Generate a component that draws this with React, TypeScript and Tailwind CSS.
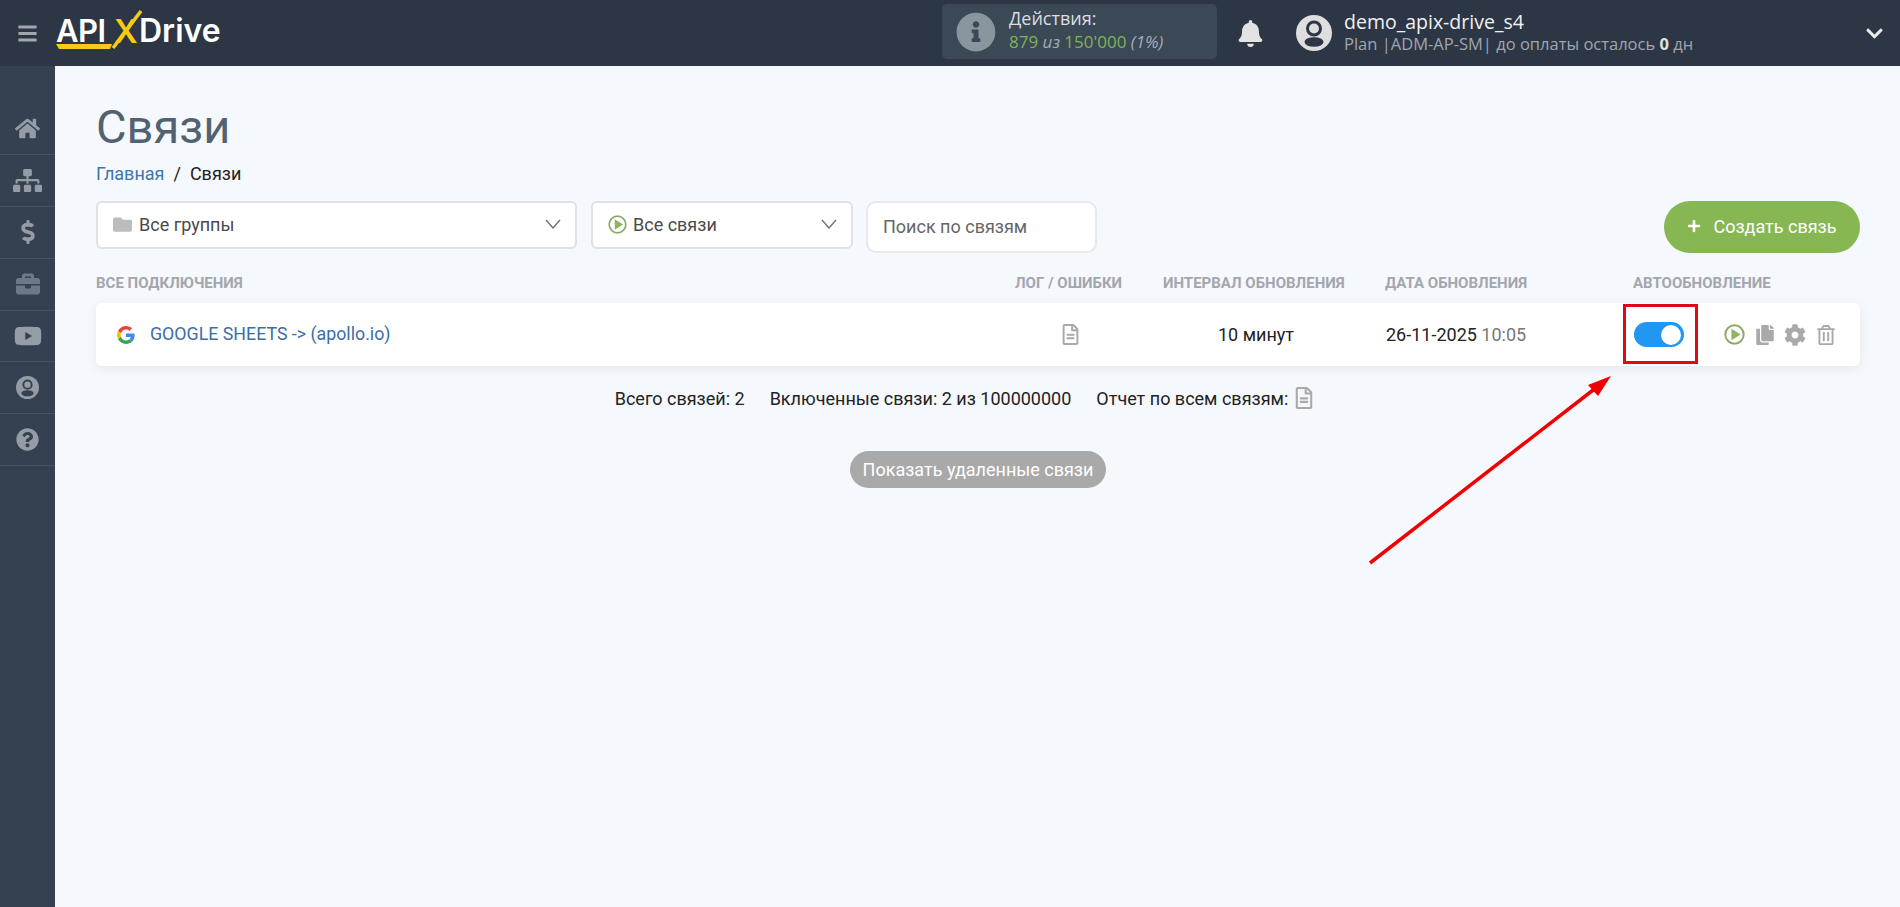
import React from 'react';
import {
  FaBars,
  FaBell,
  FaBriefcase,
  FaChevronDown,
  FaCog,
  FaCopy,
  FaDollarSign,
  FaFolder,
  FaHome,
  FaInfoCircle,
  FaPlus,
  FaQuestionCircle,
  FaRegFileAlt,
  FaRegTrashAlt,
  FaSitemap,
  FaYoutube,
} from 'react-icons/fa';

const PlayCircle = ({ size = 21 }: { size?: number }) => (
  <svg width={size} height={size} viewBox="0 0 24 24" fill="none">
    <circle cx="12" cy="12" r="10.5" stroke="#8fa968" strokeWidth="2.2" />
    <path d="M8.500 5.500 L19 12 L8.500 18.500 Z" fill="#8fb35f" />
  </svg>
);

const Chevron = () => (
  <svg width="16" height="10" viewBox="0 0 16 10" fill="none">
    <path d="M1 1 L8 9 L15 1" stroke="#6f747a" strokeWidth="1.4" />
  </svg>
);

const GoogleG = () => (
  <svg width="18" height="18" viewBox="0 0 48 48">
    <path fill="#EA4335" d="M24 9.5c3.5 0 6.7 1.3 9.1 3.5l6.8-6.8C35.8 2.400 30.300 0 24 0 14.600 0 6.500 5.400 2.600 13.200l7.900 6.100C12.400 13.600 17.700 9.500 24 9.500z" />
    <path fill="#4285F4" d="M46.900 24.500c0-1.600-.1-3.100-.4-4.500H24v9h12.900c-.6 3-2.200 5.500-4.700 7.200l7.600 5.900c4.400-4.100 7.100-10.100 7.100-17.600z" />
    <path fill="#FBBC05" d="M10.500 28.700c-.5-1.500-.8-3-.8-4.700s.3-3.200.8-4.700l-7.900-6.100C.9 16.500 0 20.100 0 24s.9 7.500 2.600 10.800l7.900-6.100z" />
    <path fill="#34A853" d="M24 48c6.500 0 11.900-2.100 15.800-5.800l-7.600-5.900c-2.100 1.400-4.900 2.300-8.200 2.300-6.300 0-11.600-4.100-13.500-9.800l-7.900 6.100C6.500 42.600 14.600 48 24 48z" />
  </svg>
);

const Avatar = ({ size, fill, cut }: { size: number; fill: string; cut: string }) => (
  <svg width={size} height={size} viewBox="0 0 36 36">
    <circle cx="18" cy="18" r="18" fill={fill} />
    <circle cx="18" cy="13.500" r="6.500" fill="none" stroke={cut} strokeWidth="3" />
    <ellipse cx="18" cy="27" rx="9.500" ry="4.800" fill={cut} />
  </svg>
);

const sideItems = [
  { icon: <FaHome size={25} />, cls: 'text-[#969ca5]' },
  { icon: <FaSitemap size={29} />, cls: 'text-[#969ca5]' },
  { icon: <FaDollarSign size={24} />, cls: 'text-[#969ca5]' },
  { icon: <FaBriefcase size={24} />, cls: 'text-[#6f7986]' },
  { icon: <FaYoutube size={28} />, cls: 'text-[#969ca5]' },
  { icon: <Avatar size={23} fill="#969ca5" cut="#354150" />, cls: '' },
  { icon: <FaQuestionCircle size={23} />, cls: 'text-[#969ca5]' },
];

const Logo = () => (
  <div className="relative ml-[18px] flex h-[50px] w-[170px] items-center font-['Inter',sans-serif] text-white">
    <span className="absolute left-0 top-[5px] text-[31px] font-semibold leading-[36px] tracking-[-0.5px]">API</span>
    <span className="absolute left-[58px] top-[5px] text-[33px] font-semibold leading-[36px] text-[#f7cb15]">X</span>
    <span className="absolute left-[83px] top-[4px] text-[32px] font-semibold leading-[38px]">Drive</span>
    <svg className="absolute left-0 top-0" width="170" height="50" viewBox="0 0 170 50" fill="none">
      <path d="M0 36 L56 36 L54 41 L3 41 Z" fill="#f7cb15" />
      <path d="M57 40 L85 3" stroke="#f7cb15" strokeWidth="3.500" />
    </svg>
  </div>
);

const Header = () => (
  <header className="flex h-[66px] items-center bg-[#2c3644] font-['Open_Sans',sans-serif] text-white">
    <FaBars className="ml-[17px] text-[#a2a6ad]" size={21} />
    <Logo />
    <div className="ml-[716px] mb-[3px] flex h-[55px] w-[275px] items-center rounded-[5px] bg-[#3b4855] pl-[14px]">
      <FaInfoCircle size={40} className="text-[#8b959e]" />
      <div className="ml-[13px] pb-[3px] leading-[23px]">
        <div className="text-[18px] text-[#dcdfe2]">Действия:</div>
        <div className="text-[17px] text-[#a6adb5]">
          <span className="text-[#7fb35c]">879</span> <i>из</i> <span className="text-[#7fb35c]">150'000</span> <i>(1%)</i>
        </div>
      </div>
    </div>
    <FaBell size={27} className="ml-[20px] text-[#e3e3e3]" />
    <div className="ml-[32px] flex">
      <Avatar size={36} fill="#dedede" cut="#2c3644" />
    </div>
    <div className="ml-[12px] leading-[22px]">
      <div className="text-[19.500px] text-[#f0f1f3]">demo_apix-drive_s4</div>
      <div className="text-[16.500px] text-[#a0a6ae]">
        Plan |ADM-AP-SM| до оплаты осталось <b className="text-[#dfe1e4]">0</b> дн
      </div>
    </div>
    <FaChevronDown size={19} className="ml-auto mr-[16px] text-[#e6e8ea]" />
  </header>
);

const Sidebar = () => (
  <aside className="w-[55px] shrink-0 bg-[#354150] pt-[37px]">
    {sideItems.map((item, i) => (
      <div key={i} className={`flex h-[51.900px] items-center justify-center border-b border-[#4a5563] ${item.cls}`}>
        {item.icon}
      </div>
    ))}
  </aside>
);

const cols = 'grid grid-cols-[919px_148px_222px_248px_1fr]';

const ConnectionRow = () => (
  <div className={`${cols} relative mt-[11px] h-[63px] items-center rounded-[6px] bg-white text-[18px] shadow-[0_3px_12px_rgba(0,0,0,0.07)]`}>
    <div className="flex items-center pl-[21px]">
      <GoogleG />
      <a className="ml-[15px] text-[17.800px] text-[#3b6ea5]">GOOGLE SHEETS -&gt; (apollo.io)</a>
    </div>
    <div className="flex w-[110px] justify-center">
      <FaRegFileAlt size={21} className="text-[#a9a9a9]" />
    </div>
    <div className="w-[186px] text-center text-[#222]">10 минут</div>
    <div className="pl-[1px] text-[#222]">
      26-11-2025 <span className="text-[#777]">10:05</span>
    </div>
    <div className="flex items-center pl-[1px]">
      <div className="flex h-[25px] w-[50px] items-center justify-end rounded-full bg-[#2196f3] pr-[3px]">
        <div className="h-[20px] w-[20px] rounded-full bg-white" />
      </div>
      <div className="ml-[40px]">
        <PlayCircle />
      </div>
      <FaCopy size={20} className="ml-[10px] text-[#a9a9a9]" />
      <FaCog size={22} className="ml-[9px] text-[#a9a9a9]" />
      <FaRegTrashAlt size={20} className="ml-[10px] text-[#a9a9a9]" />
    </div>
    <div className="absolute left-[1527px] top-[1px] h-[60px] w-[75px] border-[3px] border-[#e30613]" />
  </div>
);

export default function App() {
  return (
    <div className="relative flex h-[907px] flex-col overflow-hidden bg-[#f5f8fd] font-['Roboto',sans-serif]">
      <Header />
      <div className="flex flex-1">
        <Sidebar />
        <main className="flex-1 pl-[41px] pr-[40px] pt-[34px]">
          <h1 className="text-[47px] leading-[54px] text-[#526270]">Связи</h1>
          <div className="mt-[7px] flex h-[24px] items-center text-[18px]">
            <a className="text-[#3b76b0]">Главная</a>
            <span className="ml-[9px] text-[#222]">/</span>
            <span className="ml-[9px] text-[#222]">Связи</span>
          </div>
          <div className="mt-[16px] flex items-start text-[18px] text-[#4a4a4a]">
            <div className="flex h-[48px] w-[481px] items-center justify-between rounded-[6px] border-2 border-[#dfe1e4] bg-white pb-[2px] pl-[15px] pr-[14px]">
              <span className="flex items-center">
                <FaFolder size={19} className="mr-[7px] text-[#bdbdbd]" />
                Все группы
              </span>
              <Chevron />
            </div>
            <div className="ml-[14px] flex h-[48px] w-[262px] items-center justify-between rounded-[6px] border-2 border-[#dfe1e4] bg-white pb-[2px] pl-[15px] pr-[14px]">
              <span className="flex items-center">
                <span className="mr-[6px] flex">
                  <PlayCircle size={19} />
                </span>
                Все связи
              </span>
              <Chevron />
            </div>
            <div className="ml-[13px] flex h-[52px] w-[231px] items-center rounded-[10px] border-2 border-[#e6e8ec] bg-white pb-[2px] pl-[15px] text-[#666]">
              Поиск по связям
            </div>
            <button className="ml-auto flex h-[52px] w-[196px] items-center justify-center rounded-full bg-[#86b752] pb-[2px] text-[18px] text-white">
              <FaPlus size={14} className="mr-[12px]" />
              Создать связь
            </button>
          </div>
          <div className={`${cols} mt-[19px] h-[20px] items-center text-[15px] font-bold text-[#a3a6ad]`}>
            <div>ВСЕ ПОДКЛЮЧЕНИЯ</div>
            <div>ЛОГ / ОШИБКИ</div>
            <div>ИНТЕРВАЛ ОБНОВЛЕНИЯ</div>
            <div>ДАТА ОБНОВЛЕНИЯ</div>
            <div>АВТООБНОВЛЕНИЕ</div>
          </div>
          <ConnectionRow />
          <div className="mt-[20px] flex h-[24px] items-center justify-center gap-[25px] pr-[26px] text-[18px] text-[#222]">
            <span>Всего связей: 2</span>
            <span>Включенные связи: 2 из 100000000</span>
            <span className="flex items-center">
              Отчет по всем связям:
              <FaRegFileAlt size={22} className="ml-[5px] text-[#a9a9a9]" />
            </span>
          </div>
          <div className="mt-[41px] flex justify-center">
            <button className="h-[37px] w-[256px] rounded-full bg-[#a9a9a9] pb-[1px] text-[18px] text-white">
              Показать удаленные связи
            </button>
          </div>
        </main>
      </div>
      <svg className="absolute left-[1360px] top-[370px]" width="260" height="200" viewBox="1360 370 260 200" fill="none">
        <line x1="1370" y1="563" x2="1597" y2="387" stroke="#f00000" strokeWidth="3.500" />
        <path d="M1611 376 L1588 385 L1598 396 Z" fill="#f00000" />
      </svg>
    </div>
  );
}
